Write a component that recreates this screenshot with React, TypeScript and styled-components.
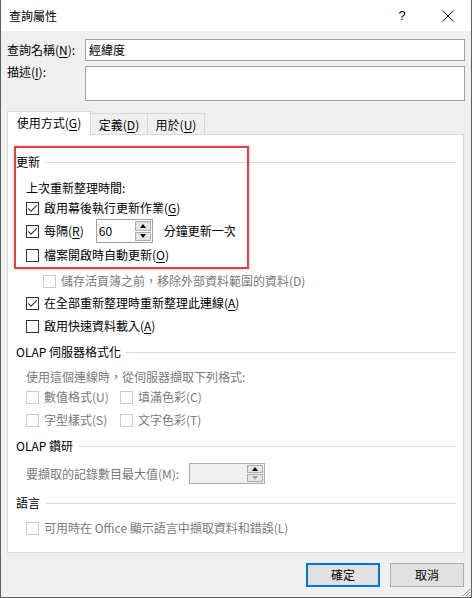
import React from 'react';
import styled, { createGlobalStyle } from 'styled-components';

const GlobalStyle = createGlobalStyle`
  html, body { margin: 0; padding: 0; background: #ffffff; }
  body {
    font-family: "Noto Sans CJK TC", "Noto Sans CJK SC", sans-serif;
    font-size: 12px;
    color: #000000;
  }
  * { box-sizing: border-box; }
  u { text-decoration-thickness: 1px; text-underline-offset: 2px; }
`;

const Window = styled.div`
  position: relative;
  width: 472px;
  height: 598px;
  border: 1px solid #5f5f5f;
  border-top: none;
  display: flex;
  flex-direction: column;
  background: #f0f0f0;
`;

const TitleBar = styled.div`
  height: 31px;
  flex: none;
  display: flex;
  align-items: center;
  background: #ffffff;
  padding-left: 8px;
`;

const Title = styled.div`
  flex: 1;
  line-height: 16px;
`;

const TitleButton = styled.div`
  width: 46px;
  height: 31px;
  display: flex;
  align-items: center;
  justify-content: center;
  font-family: "Liberation Sans", sans-serif;
  font-size: 13px;
`;

const Body = styled.div`
  flex: 1;
  display: flex;
  flex-direction: column;
  padding: 8px 6px 10px 6px;
`;

const FormGrid = styled.div`
  display: grid;
  grid-template-columns: 78px 380px;
  row-gap: 5px;
  align-items: center;
`;

const FieldLabel = styled.div<{ $top?: boolean }>`
  line-height: 16px;
  align-self: ${p => (p.$top ? 'start' : 'center')};
  margin-top: ${p => (p.$top ? '-2px' : '0')};
`;

const TextBox = styled.div<{ $h: number }>`
  height: ${p => p.$h}px;
  border: 1px solid #a2a2a2;
  background: #ffffff;
  padding-left: 3px;
  display: flex;
  align-items: center;
  line-height: 16px;
`;

const TabRow = styled.div`
  display: flex;
  align-items: flex-end;
  margin-top: 10px;
  margin-bottom: -1px;
  position: relative;
  z-index: 1;
`;

const Tab = styled.div<{ $active?: boolean; $w: number }>`
  width: ${p => p.$w}px;
  height: ${p => (p.$active ? 24 : 22)}px;
  border: 1px solid #d9d9d9;
  border-bottom: ${p => (p.$active ? '1px solid #ffffff' : '1px solid #d9d9d9')};
  margin-left: ${p => (p.$active ? 0 : -1)}px;
  background: ${p => (p.$active ? '#ffffff' : '#f0f0f0')};
  display: flex;
  align-items: center;
  justify-content: center;
  padding-top: ${p => (p.$active ? 0 : 2)}px;
  line-height: 16px;
  &:first-child { margin-left: 0; }
`;

const Panel = styled.div`
  position: relative;
  width: 457px;
  height: 419px;
  border: 1px solid #d9d9d9;
  background: #ffffff;
  padding: 17px 7px 13px 8px;
  display: flex;
  flex-direction: column;
`;

const Highlight = styled.div`
  position: absolute;
  left: 6px;
  top: 11px;
  width: 235px;
  height: 123px;
  border: 2px solid #ea3e47;
  box-shadow: 0 0 3px rgba(0, 0, 0, 0.25);
  pointer-events: none;
`;

const Heading = styled.div<{ $mt?: number }>`
  height: 20px;
  margin-top: ${p => p.$mt ?? 0}px;
  display: flex;
  align-items: center;
  gap: 5px;
  line-height: 16px;
  white-space: nowrap;
  &::after {
    content: '';
    flex: 1;
    height: 1px;
    background: #dcdcdc;
  }
`;

const Row = styled.div<{ $mt?: number; $indent?: number; $h?: number; $disabled?: boolean }>`
  height: ${p => p.$h ?? 20}px;
  margin-top: ${p => p.$mt ?? 0}px;
  margin-left: ${p => p.$indent ?? 10}px;
  display: flex;
  align-items: center;
  gap: 5px;
  line-height: 16px;
  white-space: nowrap;
  color: ${p => (p.$disabled ? '#7a7a7a' : '#000000')};
`;

const PairGrid = styled.div<{ $mt?: number }>`
  margin-top: ${p => p.$mt ?? 0}px;
  margin-left: 10px;
  display: grid;
  grid-template-columns: 94px auto;
  justify-content: start;
  row-gap: 3px;
`;

const Box = styled.span<{ $disabled?: boolean }>`
  width: 13px;
  height: 13px;
  flex: none;
  border: 1px solid ${p => (p.$disabled ? '#cccccc' : '#333333')};
  background: #ffffff;
  display: flex;
  align-items: center;
  justify-content: center;
`;

const Spin = styled.div<{ $w: number; $h: number; $disabled?: boolean }>`
  width: ${p => p.$w}px;
  height: ${p => p.$h}px;
  border: 1px solid ${p => (p.$disabled ? '#adadad' : '#a2a2a2')};
  background: ${p => (p.$disabled ? '#f0f0f0' : '#ffffff')};
  display: flex;
  padding: 1px;
  flex: none;
`;

const SpinValue = styled.div`
  flex: 1;
  padding-left: 1px;
  display: flex;
  align-items: center;
  line-height: 16px;
  color: #000000;
`;

const SpinButtons = styled.div`
  width: 16px;
  display: flex;
  flex-direction: column;
  gap: 1px;
`;

const SpinButton = styled.div`
  flex: 1;
  border: 1px solid #adadad;
  background: #e5e5e5;
  display: flex;
  align-items: center;
  justify-content: center;
`;

const Arrow = styled.span<{ $up?: boolean; $gray?: boolean }>`
  width: 0;
  height: 0;
  border-left: 3.5px solid transparent;
  border-right: 3.5px solid transparent;
  ${p =>
    p.$up
      ? `border-bottom: 4px solid ${p.$gray ? '#a0a0a0' : '#000'};`
      : `border-top: 4px solid ${p.$gray ? '#a0a0a0' : '#000'};`}
`;

const Spacer = styled.span<{ $w: number }>`
  display: inline-block;
  width: ${p => p.$w}px;
  flex: none;
`;

const Footer = styled.div`
  margin-top: 10px;
  display: flex;
  justify-content: flex-end;
  gap: 10px;
  padding-right: 1px;
`;

const DialogButton = styled.div<{ $primary?: boolean }>`
  width: 74px;
  height: 24px;
  background: #e1e1e1;
  border: ${p => (p.$primary ? '2px solid #0078d7' : '1px solid #adadad')};
  display: flex;
  align-items: center;
  justify-content: center;
  line-height: 16px;
`;

const Grip = styled.svg`
  position: absolute;
  right: 0;
  bottom: 0;
`;

const Check: React.FC<{ checked?: boolean; disabled?: boolean }> = ({ checked, disabled }) => (
  <Box $disabled={disabled}>
    {checked && (
      <svg width="11" height="11" viewBox="0 0 11 11">
        <path d="M1.2 5.3 L4 8.1 L9.8 2.3" fill="none" stroke="#333" strokeWidth="1.1" />
      </svg>
    )}
  </Box>
);

const SpinBox: React.FC<{ w: number; h: number; value?: string; disabled?: boolean }> = ({ w, h, value, disabled }) => (
  <Spin $w={w} $h={h} $disabled={disabled}>
    <SpinValue>{value}</SpinValue>
    <SpinButtons>
      <SpinButton><Arrow $up /></SpinButton>
      <SpinButton><Arrow $gray={disabled} /></SpinButton>
    </SpinButtons>
  </Spin>
);

export default function App() {
  return (
    <>
      <GlobalStyle />
      <Window>
        <TitleBar>
          <Title>查詢屬性</Title>
          <TitleButton>?</TitleButton>
          <TitleButton>
            <svg width="12" height="12" viewBox="0 0 12 12">
              <path d="M0.5 0.5 L11.5 11.5 M11.5 0.5 L0.5 11.5" stroke="#000" strokeWidth="1" />
            </svg>
          </TitleButton>
        </TitleBar>
        <Body>
          <FormGrid>
            <FieldLabel>查詢名稱(<u>N</u>):</FieldLabel>
            <TextBox $h={22}>經緯度</TextBox>
            <FieldLabel $top>描述(<u>I</u>):</FieldLabel>
            <TextBox $h={35} />
          </FormGrid>
          <TabRow>
            <Tab $active $w={84}>使用方式(<u>G</u>)</Tab>
            <Tab $w={58}>定義(<u>D</u>)</Tab>
            <Tab $w={58}>用於(<u>U</u>)</Tab>
          </TabRow>
          <Panel>
            <Heading>更新</Heading>
            <Row $mt={6}>上次重新整理時間:</Row>
            <Row>
              <Check checked />
              <span>啟用幕後執行更新作業(<u>G</u>)</span>
            </Row>
            <Row $mt={1} $h={24}>
              <Check checked />
              <span>每隔(<u>R</u>)</span>
              <Spacer $w={2} />
              <SpinBox w={57} h={24} value="60" />
              <Spacer $w={1} />
              <span>分鐘更新一次</span>
            </Row>
            <Row $mt={2}>
              <Check />
              <span>檔案開啟時自動更新(<u>O</u>)</span>
            </Row>
            <Row $mt={6} $indent={27} $disabled>
              <Check disabled />
              <span>儲存活頁簿之前，移除外部資料範圍的資料(D)</span>
            </Row>
            <Row $mt={2}>
              <Check checked />
              <span>在全部重新整理時重新整理此連線(<u>A</u>)</span>
            </Row>
            <Row $mt={3}>
              <Check />
              <span>啟用快速資料載入(<u>A</u>)</span>
            </Row>
            <Heading $mt={6}>OLAP 伺服器格式化</Heading>
            <Row $mt={5} $disabled>使用這個連線時，從伺服器擷取下列格式:</Row>
            <PairGrid>
              <Row $indent={0} $disabled><Check disabled /><span>數值格式(U)</span></Row>
              <Row $indent={0} $disabled><Check disabled /><span>填滿色彩(C)</span></Row>
              <Row $indent={0} $disabled><Check disabled /><span>字型樣式(S)</span></Row>
              <Row $indent={0} $disabled><Check disabled /><span>文字色彩(T)</span></Row>
            </PairGrid>
            <Heading $mt={6}>OLAP 鑽研</Heading>
            <Row $mt={7} $h={21} $disabled>
              <span>要擷取的記錄數目最大值(M):</span>
              <Spacer $w={-1} />
              <SpinBox w={76} h={21} disabled />
            </Row>
            <Heading $mt={9}>語言</Heading>
            <Row $mt={5} $disabled>
              <Check disabled />
              <span>可用時在 Office 顯示語言中擷取資料和錯誤(L)</span>
            </Row>
            <Highlight />
          </Panel>
          <Footer>
            <DialogButton $primary>確定</DialogButton>
            <DialogButton>取消</DialogButton>
          </Footer>
        </Body>
        <Grip width="10" height="10" viewBox="0 0 10 10">
          <path d="M9 2 L2 9 M9 5 L5 9 M9 8 L8 9" stroke="#9a9a9a" strokeWidth="1" />
        </Grip>
      </Window>
    </>
  );
}
